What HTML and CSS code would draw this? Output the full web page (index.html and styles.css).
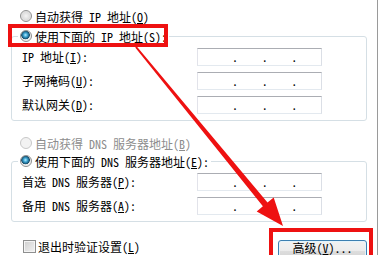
FILE: index.html
```html
<html>
	<head>
		<link rel="stylesheet" href="styles.css">
	</head>
	<body>
		<div class="page">
			<div class="opt first">
				<span class="radio"></span>
				<label>自动获得 IP 地址(<u>O</u>)</label>
			</div>
			<fieldset class="group ip">
				<legend><span class="head"><span class="radio on"></span><label>使用下面的 IP 地址(<u>S</u>):</label></span></legend>
				<div class="fields">
					<label>IP 地址(<u>I</u>):</label>
					<div class="ipbox"><span>.</span><span>.</span><span>.</span></div>
					<label>子网掩码(<u>U</u>):</label>
					<div class="ipbox"><span>.</span><span>.</span><span>.</span></div>
					<label>默认网关(<u>D</u>):</label>
					<div class="ipbox"><span>.</span><span>.</span><span>.</span></div>
				</div>
			</fieldset>
			<div class="opt off">
				<span class="radio dim"></span>
				<label>自动获得 DNS 服务器地址(<u>B</u>)</label>
			</div>
			<fieldset class="group dns">
				<legend><span class="head"><span class="radio on"></span><label>使用下面的 DNS 服务器地址(<u>E</u>):</label></span></legend>
				<div class="fields">
					<label>首选 DNS 服务器(<u>P</u>):</label>
					<div class="ipbox"><span>.</span><span>.</span><span>.</span></div>
					<label>备用 DNS 服务器(<u>A</u>):</label>
					<div class="ipbox"><span>.</span><span>.</span><span>.</span></div>
				</div>
			</fieldset>
			<div class="foot">
				<div class="check">
					<span class="box"></span>
					<label>退出时验证设置(<u>L</u>)</label>
				</div>
				<button class="btn">高级(<u>V</u>)...</button>
			</div>
			<!-- annotation marks drawn over the dialog -->
			<svg class="marks" width="382" height="255" viewBox="0 0 382 255">
				<rect x="10" y="26" width="156" height="19" fill="none" stroke="#ee1111" stroke-width="4" />
				<rect x="271" y="230" width="100" height="40" fill="none" stroke="#ee1111" stroke-width="4" />
				<polygon fill="#ee1111" points="136.8,46.4 267.5,202.5 273.7,197.4 283,226 256.7,211.4 262.9,206.3 135.2,47.6" />
			</svg>
		</div>
	</body>
</html>
```

FILE: styles.css
```css
body {
	margin: 0;
	background: #fff;
	color: #000;
	font: 12px "Noto Sans Mono CJK SC", "Noto Sans CJK SC", sans-serif;
	}

.page {
	position: relative;
	width: 377px;
	height: 255px;
	border-right: 1px solid #9a9a9a;
	overflow: hidden;
	}

.opt {
	display: flex;
	align-items: center;
	height: 20px;
	padding-left: 20px;
	}

.first {
	margin-top: 6px;
	}

.off {
	height: 18px;
	margin-top: 13px;
	color: #8d8d8d;
	}

.radio {
	flex: none;
	width: 10px;
	height: 10px;
	margin-right: 3px;
	border: 1px solid #8e8f8f;
	border-radius: 50%;
	background: radial-gradient(circle at 50% 50%, #f4f4f4 0, #dcdcdc 4px, #f0f0f0 6px);
	}

.radio.on {
	background: radial-gradient(circle at 45% 40%, #b8ecff 0, #3ba3d0 2px, #174d6b 4px, #e6e6e6 4.6px, #f4f4f4 6px);
	}

.radio.dim {
	border-color: #c8c8c8;
	background: #f2f2f2;
	}

.group {
	margin: 0 0 0 11px;
	width: 356px;
	box-sizing: border-box;
	border: 1px solid #d5dfe5;
	border-radius: 3px;
	padding: 2px 0 6px 10px;
	}

.group legend {
	padding: 0 2px;
	margin-left: -4px;
	}

.head {
	display: flex;
	align-items: center;
	height: 20px;
	}

.dns legend .head {
	height: 18px;
	}

.dns {
	padding-top: 3px;
	}

.fields {
	display: grid;
	grid-template-columns: 175px 125px;
	row-gap: 6px;
	}

.fields label {
	line-height: 18px;
	}

.ipbox {
	display: flex;
	height: 18px;
	box-sizing: border-box;
	padding-left: 34px;
	border: 1px solid;
	border-color: #abadb3 #dbdfe6 #e3e9ef #e2e3ea;
	line-height: 16px;
	}

.ipbox span {
	width: 31px;
	}

.foot {
	display: flex;
	align-items: flex-start;
	margin-top: 18px;
	padding-left: 23px;
	}

.check {
	display: flex;
	align-items: center;
	height: 16px;
	margin-top: -2px;
	}

.box {
	width: 11px;
	height: 11px;
	margin-right: 2px;
	border: 1px solid #8e8f8f;
	background: linear-gradient(135deg, #cfcfcf, #f2f2f2);
	box-shadow: inset 0 0 0 1px #f4f4f4;
	}

.btn {
	display: flex;
	justify-content: center;
	align-items: flex-start;
	width: 89px;
	height: 23px;
	margin: 0 10px 0 auto;
	padding: 0;
	border: 1px solid #3c7fb1;
	border-radius: 3px;
	background: linear-gradient(#f2f2f2 0%, #ebebeb 50%, #dddddd 50%, #cfcfcf 100%);
	box-shadow: inset 0 0 0 1px #e4f4fc;
	font: inherit;
	line-height: 14px;
	color: #000;
	}

.marks {
	position: absolute;
	top: 0;
	left: 0;
	pointer-events: none;
	}
```
